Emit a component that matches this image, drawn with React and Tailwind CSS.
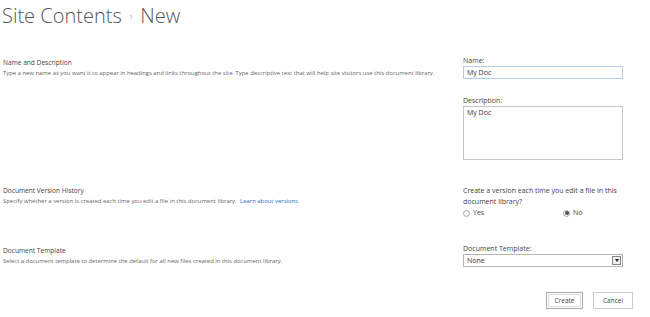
import React from "react";

const Section = ({ title, desc, children, className }) => (
  <div className={`flex ${className}`}>
    <div className="w-[460px] shrink-0 pl-[3px] pt-[1px]">
      <p className="text-[6.6px] leading-[11px] text-[#444]">{title}</p>
      <p className="text-[5.9px] leading-[10px] text-[#666] whitespace-nowrap">{desc}</p>
    </div>
    <div className="w-[163px] pl-[3px]">{children}</div>
  </div>
);

const Radio = ({ label, checked }) => (
  <label className="flex items-center gap-[3px]">
    <span className="w-[7px] h-[7px] rounded-full border border-[#aaa] bg-[#f4f4f4] flex items-center justify-center">
      {checked && <span className="w-[4px] h-[4px] rounded-full bg-[#555]" />}
    </span>
    <span>{label}</span>
  </label>
);

export default function App() {
  return (
    <div
      className="w-[650px] h-[317px] bg-white overflow-hidden text-[#444]"
      style={{ fontFamily: '"Open Sans", "Liberation Sans", sans-serif' }}
    >
      <h1 className="pl-[2px] pt-[2px] h-[56px] text-[20px] leading-[28px] font-light text-[#555] flex items-baseline">
        Site Contents
        <span className="text-[10px] text-[#888] mx-[8px] relative top-[-3px]">›</span>
        New
      </h1>

      <Section
        className="h-[126px]"
        title="Name and Description"
        desc="Type a new name as you want it to appear in headings and links throughout the site. Type descriptive text that will help site visitors use this document library."
      >
        <p className="text-[7px] leading-[10px]">Name:</p>
        <div className="h-[13px] border border-[#b6cde3] text-[7px] leading-[11px] pl-[3px] text-[#333]">My Doc</div>
        <p className="text-[7px] leading-[10px] mt-[17px]">Description:</p>
        <div className="h-[54px] border border-[#c6c6c6] text-[7px] leading-[11px] pl-[3px] text-[#333]">My Doc</div>
      </Section>

      <Section
        className="h-[62px] pt-[2px]"
        title="Document Version History"
        desc={
          <>
            Specify whether a version is created each time you edit a file in this document library.{" "}
            <span className="text-[#2a6ebb] ml-[2px]">Learn about versions.</span>
          </>
        }
      >
        <p className="text-[7px] leading-[11px] pt-[1px]">
          Create a version each time you edit a file in this document library?
        </p>
        <div className="flex text-[7px] leading-[10px] mt-[1px]">
          <div className="w-[100px]">
            <Radio label="Yes" />
          </div>
          <Radio label="No" checked />
        </div>
      </Section>

      <Section
        className="h-[46px]"
        title="Document Template"
        desc="Select a document template to determine the default for all new files created in this document library."
      >
        <p className="text-[7px] leading-[10px]">Document Template:</p>
        <div className="h-[13px] border border-[#b5b5b5] text-[7px] leading-[11px] pl-[3px] text-[#333] flex justify-between items-center">
          <span>None</span>
          <span className="w-[9px] h-[9px] mr-[1px] border border-[#888] bg-[#eee] flex items-center justify-center">
            <span className="w-0 h-0 border-l-[2.5px] border-r-[2.5px] border-t-[3px] border-l-transparent border-r-transparent border-t-[#222]" />
          </span>
        </div>
      </Section>

      <div className="flex justify-end gap-[10px] pr-[17px] mt-[2px]">
        <button className="w-[37px] h-[17px] border border-[#aaa] bg-white text-[6.5px] text-[#444] outline outline-1 outline-offset-[-3px] outline-[#ddd]">
          Create
        </button>
        <button className="w-[40px] h-[17px] border border-[#ccc] bg-white text-[6.5px] text-[#444]">
          Cancel
        </button>
      </div>
    </div>
  );
}
